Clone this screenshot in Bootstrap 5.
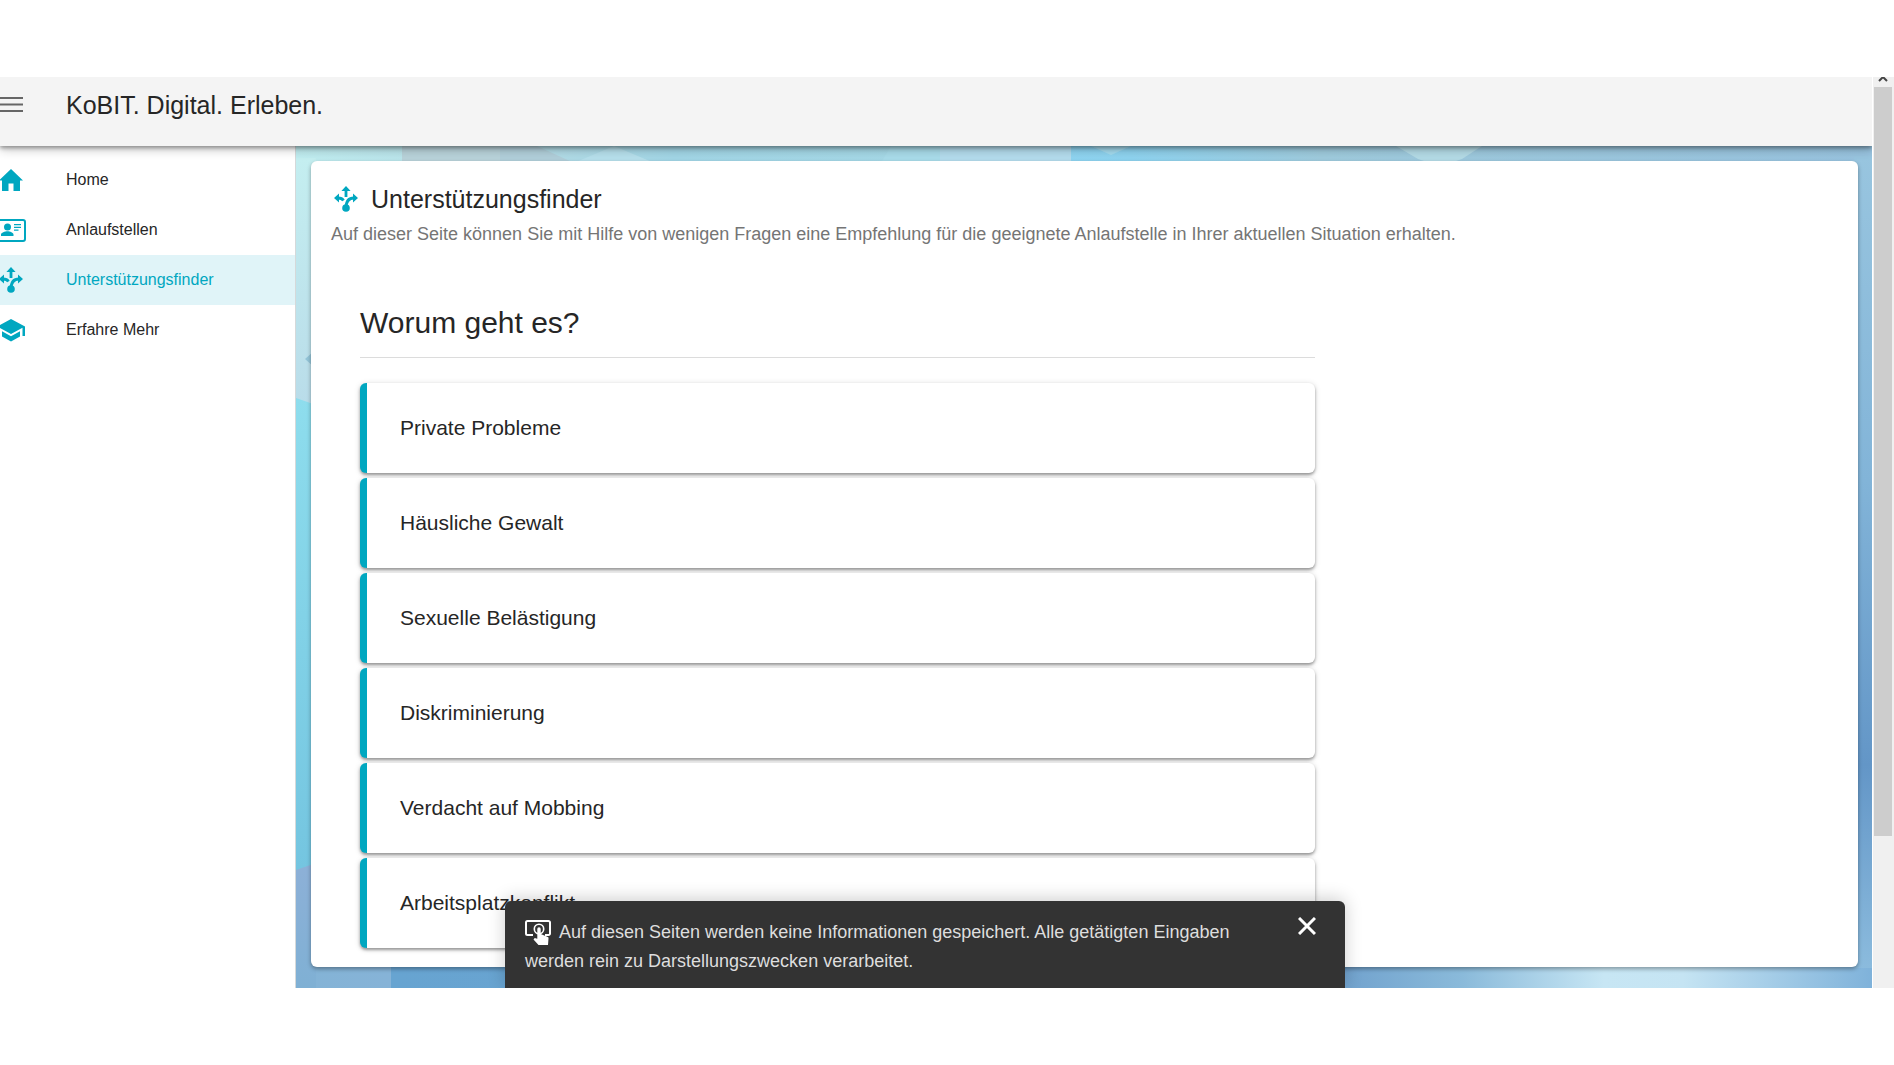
<!DOCTYPE html>
<html lang="de">
<head>
<meta charset="utf-8">
<meta name="viewport" content="width=device-width, initial-scale=1">
<title>KoBIT. Digital. Erleben.</title>
<link href="https://cdn.jsdelivr.net/npm/bootstrap@5.3.0/dist/css/bootstrap.min.css" rel="stylesheet">
<style>
:root { --teal: #00a7c0; }
body { font-family: "Liberation Sans", Arial, sans-serif; color: #262626; background: #fff; }
.page-frame { padding: 77px 0; min-height: 100vh; }
.app-bar { height: 69px; padding-bottom: 14px; background: #f4f4f4; box-shadow: 0 2px 4px rgba(0,0,0,.35), 0 4px 10px rgba(0,0,0,.2); z-index: 3; }
.menu-btn { width: 66px; }
.app-title { font-size: 25px; line-height: 32px; }
.side-nav { width: 296px; padding-top: 9px; border-right: 1px solid #d5d9da; background: #fff; }
.side-nav a { height: 50px; color: #262626; font-size: 16px; text-decoration: none; }
.side-nav a.active { background: #e0f4f8; color: var(--teal); }
.side-icon { width: 66px; color: var(--teal); }
.backdrop { z-index: 0; }
.stage { padding: 15px 14px 21px 15px; }
.finder { border-radius: 6px; padding: 22px 20px 19px; box-shadow: 0 2px 4px rgba(0,0,0,.35); z-index: 1; }
.finder-title { font-size: 25px; line-height: 32px; gap: 13px; }
.finder-title svg { margin-left: 3px; color: var(--teal); }
.finder-intro { font-size: 18px; line-height: 24px; color: #757575; margin-top: 7px; }
.question { width: 63.4%; margin: 57px 0 0 29px; }
.question-title { font-size: 30px; line-height: 40px; padding-bottom: 14px; border-bottom: 1px solid #dcdcdc; }
.answers { gap: 5px; margin-top: 25px; }
.answer { height: 90px; border: 0; border-left: 7px solid var(--teal); border-radius: 6px; background: #fff; padding: 0 33px; font-size: 21px; color: #262626; box-shadow: 0 2px 3px rgba(0,0,0,.35), 0 1px 6px rgba(0,0,0,.15); }
.scroll-track { width: 22px; background: #f0f0f0; border-left: 1px solid #fff; padding: 0 2px 0 1px; z-index: 4; }
.scroll-cap { height: 10px; }
.scroll-thumb { height: 82.2%; background: #cdcdcd; }
.notice-row { z-index: 5; padding-right: 44px; }
.notice { width: 840px; height: 87px; background: #333; color: #dedede; border-radius: 6px 6px 0 0; padding: 17px 20px 0; font-size: 18px; line-height: 29px; box-shadow: 0 -2px 18px rgba(0,0,0,.2); }
.notice p { width: 740px; }
.close-btn { width: 36px; height: 36px; margin-top: -10px; }
</style>
<script src="https://cdn.jsdelivr.net/npm/bootstrap@5.3.0/dist/js/bootstrap.bundle.min.js"></script>
</head>
<body>
<svg width="0" height="0" class="position-absolute" aria-hidden="true">
  <symbol id="routes" viewBox="0 0 24 26">
    <path d="M12 0l4.600 5H7.400zM0 12l5-4.600v9.200zM24 12l-5-4.600v9.200z" fill="currentColor"/>
    <path d="M12 4v7M4 12c3 0 4.500 .8 5.500 2.500M20 12c-5 0-8 3-8 10" fill="none" stroke="currentColor" stroke-width="2.800"/>
    <circle cx="12" cy="22" r="3.800" fill="currentColor"/>
  </symbol>
</svg>
<div class="page-frame d-flex">
  <div class="position-relative d-flex flex-grow-1 overflow-hidden">
    <div class="d-flex flex-column flex-grow-1">
      <header class="app-bar d-flex align-items-center flex-shrink-0 position-relative">
        <button type="button" class="menu-btn btn p-0 border-0 text-start d-flex" aria-label="Menü">
          <svg width="23" height="17" viewBox="0 0 23 17"><path d="M0 2h23M0 8.500h23M0 15h23" stroke="#666" stroke-width="2"/></svg>
        </button>
        <span class="app-title">KoBIT. Digital. Erleben.</span>
      </header>
      <div class="d-flex flex-grow-1">
        <nav class="side-nav flex-shrink-0">
          <a href="#" class="d-flex align-items-center">
            <span class="side-icon d-flex"><svg width="24" height="22" viewBox="0 0 24 22"><path d="M11 0l12 11.500h-3V22h-6.500v-7.500h-5V22H2V11.500h-3z" fill="currentColor"/></svg></span>Home</a>
          <a href="#" class="d-flex align-items-center">
            <span class="side-icon d-flex"><svg width="26" height="23" viewBox="0 0 26 23" fill="currentColor"><path d="M-2 1h25a2 2 0 0 1 2 2v17a2 2 0 0 1-2 2H-2" fill="none" stroke="currentColor" stroke-width="2"/><circle cx="7.500" cy="8" r="3.500"/><path d="M1 17v-1.500c0-2 4-3.300 6.500-3.300s6 1.300 6 3.300V17zM14 5h7v1.200h-7zM14 7.800h7V9h-7zM14 10.500h4.500v1.200H14z"/></svg></span>Anlaufstellen</a>
          <a href="#" class="active d-flex align-items-center" aria-current="page">
            <span class="side-icon d-flex"><svg width="24" height="26" viewBox="1 0 24 26"><use href="#routes" width="24" height="26"/></svg></span>Unterstützungsfinder</a>
          <a href="#" class="d-flex align-items-center">
            <span class="side-icon d-flex"><svg width="26" height="23" viewBox="0 0 26 23" fill="currentColor"><path d="M11 0L-3 7.500 11 15l11.500-6.200V17H25V7.500zM2 12.300v5.200L11 22.500l9-5v-5.200l-9 5z"/></svg></span>Erfahre Mehr</a>
        </nav>
        <main class="stage position-relative flex-grow-1">
          <svg class="backdrop position-absolute top-0 start-0 w-100 h-100" viewBox="0 0 1576 842" preserveAspectRatio="none" aria-hidden="true">
            <defs>
              <linearGradient id="topBand"><stop offset="0" stop-color="#c0edf0"/><stop offset=".15" stop-color="#b4dce6"/><stop offset=".24" stop-color="#a2d6e6"/><stop offset=".4" stop-color="#a6d9e7"/><stop offset=".41" stop-color="#90d7f5"/><stop offset=".53" stop-color="#8ed3ef"/><stop offset=".65" stop-color="#9fcbdd"/><stop offset="1" stop-color="#98c3df"/></linearGradient>
              <linearGradient id="bottomBand"><stop offset="0" stop-color="#83b3d6"/><stop offset=".06" stop-color="#86b3d7"/><stop offset=".06" stop-color="#67a4d1"/><stop offset=".66" stop-color="#70a1cd"/><stop offset=".74" stop-color="#8abada"/><stop offset=".83" stop-color="#c7e6f4"/><stop offset=".88" stop-color="#c5e4f3"/><stop offset="1" stop-color="#7fb2da"/></linearGradient>
              <linearGradient id="leftBand" x2="0" y2="1"><stop offset="0" stop-color="#c4eef0"/><stop offset="1" stop-color="#b9dce9"/></linearGradient>
              <linearGradient id="leftCyan" x2="0" y2="1"><stop offset="0" stop-color="#8edded"/><stop offset="1" stop-color="#74c5e0"/></linearGradient>
              <linearGradient id="leftBlue" x2="0" y2="1"><stop offset="0" stop-color="#8db0d7"/><stop offset="1" stop-color="#7fb0d4"/></linearGradient>
              <linearGradient id="rightBand" x2="0" y2="1"><stop offset="0" stop-color="#98c5df"/><stop offset=".4" stop-color="#82b4d8"/><stop offset=".75" stop-color="#6396c7"/><stop offset="1" stop-color="#8bbbdd"/></linearGradient>
            </defs>
            <path d="M0 0h1576v400H0z" fill="url(#topBand)"/>
            <path d="M0 400h1576v442H0z" fill="url(#bottomBand)"/>
            <path d="M106 0h98v40h-98z" fill="#b9d3da"/><path d="M204 0h37l35 16v20h-72z" fill="#b1cfda"/>
            <path d="M280 16L318 0l38 16z" fill="#b7e0ec"/><path d="M583 20l12-20h50v20z" fill="#a9dcea"/>
            <path d="M644 0h131v20H644z" fill="#b4dced"/><path d="M795 0l20 9 20-9z" fill="#a5dcef"/>
            <path d="M1100 0l22 13 12 4h20l12-4 20-13z" fill="#b4dbe6"/>
            <path d="M0 12h20v250H0z" fill="url(#leftBand)"/>
            <path d="M0 252l20 7v465H0z" fill="url(#leftCyan)"/>
            <path d="M9 213l9-8v16z" fill="#94c5d8"/>
            <path d="M0 724l20-7v125H0z" fill="url(#leftBlue)"/>
            <path d="M1558 10h18v812h-18z" fill="url(#rightBand)"/>
          </svg>
          <section class="finder card border-0 position-relative">
            <h1 class="finder-title fw-normal d-flex align-items-center mb-0"><svg width="24" height="26" viewBox="0 0 24 26"><use href="#routes" width="24" height="26"/></svg>Unterstützungsfinder</h1>
            <p class="finder-intro mb-0">Auf dieser Seite können Sie mit Hilfe von wenigen Fragen eine Empfehlung für die geeignete Anlaufstelle in Ihrer aktuellen Situation erhalten.</p>
            <div class="question">
              <h2 class="question-title fw-normal mb-0">Worum geht es?</h2>
              <div class="answers d-flex flex-column">
                <button type="button" class="answer text-start">Private Probleme</button>
                <button type="button" class="answer text-start">Häusliche Gewalt</button>
                <button type="button" class="answer text-start">Sexuelle Belästigung</button>
                <button type="button" class="answer text-start">Diskriminierung</button>
                <button type="button" class="answer text-start">Verdacht auf Mobbing</button>
                <button type="button" class="answer text-start">Arbeitsplatzkonflikt</button>
              </div>
            </div>
          </section>
        </main>
      </div>
    </div>
    <div class="scroll-track flex-shrink-0" aria-hidden="true">
      <div class="scroll-cap d-flex justify-content-center overflow-hidden"><svg width="10" height="5" viewBox="0 0 10 5"><path d="M1 4l4-4 4 4" fill="none" stroke="#444" stroke-width="2"/></svg></div>
      <div class="scroll-thumb"></div>
    </div>
    <div class="notice-row position-absolute bottom-0 start-0 w-100 d-flex justify-content-center">
      <div class="notice d-flex justify-content-between" role="status">
        <p class="mb-0"><svg class="me-1" width="26" height="26" viewBox="0 0 26 26" fill="none"><path d="M8 15H2.500A1.500 1.500 0 0 1 1 13.500v-11A1.500 1.500 0 0 1 2.500 1h21A1.500 1.500 0 0 1 25 2.500v11a1.500 1.500 0 0 1-1.500 1.500H20" stroke="#fff" stroke-width="2"/><circle cx="14" cy="9" r="4.700" stroke="#fff" stroke-width="1.600"/><path d="M12.300 9a1.700 1.700 0 0 1 3.400 0v5l6 2.500c1.500 .5 2 1 1.800 2L23 25h-9.500l-5-5.500 1.200-1.500 2.600.8z" fill="#fff"/></svg>
        Auf diesen Seiten werden keine Informationen gespeichert. Alle getätigten Eingaben werden rein zu Darstellungszwecken verarbeitet.</p>
        <button type="button" class="close-btn btn p-0 border-0 d-flex align-items-center justify-content-center" aria-label="Schließen"><svg width="18" height="18" viewBox="0 0 18 18"><path d="M1 1l16 16M17 1L1 17" stroke="#fff" stroke-width="3"/></svg></button>
      </div>
    </div>
  </div>
</div>
</body>
</html>
